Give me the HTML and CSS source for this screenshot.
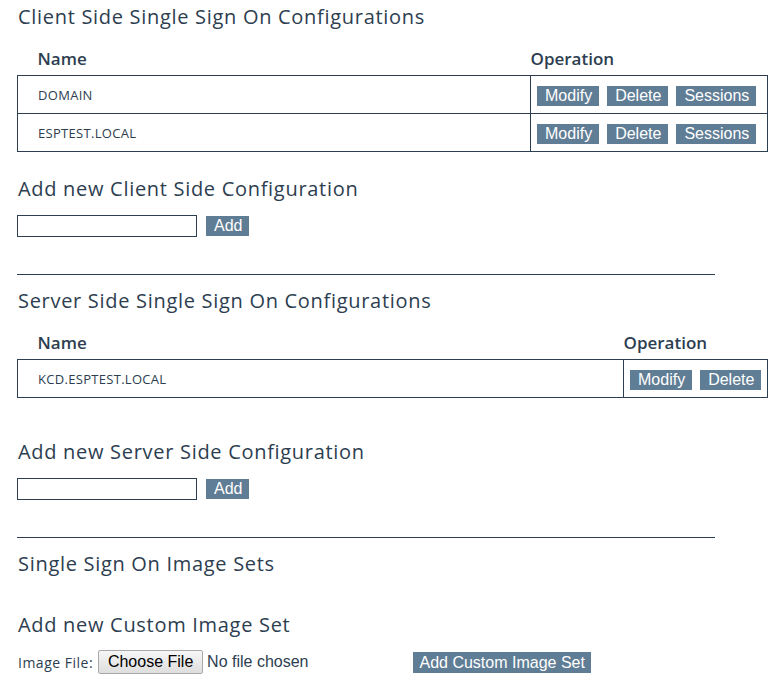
FILE: index.html
```html
<!DOCTYPE html>
<html>
<head>
<meta charset="utf-8">
<link rel="stylesheet" href="styles.css">
</head>
<body>
<div class="page">
  <h2 class="title first">Client Side Single Sign On Configurations</h2>
  <table class="grid grid-client">
    <colgroup><col class="col-name"><col class="col-op"></colgroup>
    <thead>
      <tr><th class="th-name">Name</th><th class="th-op">Operation</th></tr>
    </thead>
    <tbody>
      <tr><td class="td-name">DOMAIN</td><td class="td-op"><button class="btn">Modify</button><button class="btn">Delete</button><button class="btn">Sessions</button></td></tr>
      <tr><td class="td-name">ESPTEST.LOCAL</td><td class="td-op"><button class="btn">Modify</button><button class="btn">Delete</button><button class="btn">Sessions</button></td></tr>
    </tbody>
  </table>

  <h2 class="title after-table">Add new Client Side Configuration</h2>
  <div class="add-row"><input class="text-in" type="text"><button class="btn">Add</button></div>
  <hr class="sep">

  <h2 class="title after-hr">Server Side Single Sign On Configurations</h2>
  <table class="grid grid-server">
    <colgroup><col class="col-name"><col class="col-op"></colgroup>
    <thead>
      <tr><th class="th-name">Name</th><th class="th-op">Operation</th></tr>
    </thead>
    <tbody>
      <tr><td class="td-name">KCD.ESPTEST.LOCAL</td><td class="td-op"><button class="btn">Modify</button><button class="btn">Delete</button></td></tr>
    </tbody>
  </table>

  <h2 class="title after-table2">Add new Server Side Configuration</h2>
  <div class="add-row"><input class="text-in" type="text"><button class="btn">Add</button></div>
  <hr class="sep">

  <h2 class="title after-hr">Single Sign On Image Sets</h2>
  <h2 class="title after-sets">Add new Custom Image Set</h2>
  <div class="file-row">
    <label class="file-label">Image File:</label>
    <span class="file-btn">Choose File</span>
    <span class="file-none">No file chosen</span>
    <button class="btn btn-custom">Add Custom Image Set</button>
  </div>
</div>
</body>
</html>
```

FILE: styles.css
```css
html, body {
  margin: 0;
  padding: 0;
  background: #ffffff;
}
.page {
  padding-left: 17px;
  color: #2d3e50;
  font-family: "Open Sans", "DejaVu Sans", sans-serif;
}
.title {
  font-size: 20px;
  font-weight: normal;
  line-height: 24px;
  height: 24px;
  margin: 0;
  padding-left: 1px;
  letter-spacing: 0.7px;
  white-space: nowrap;
}
.first { margin-top: 5px; }
.after-table { margin-top: 25px; }
.after-hr { margin-top: 14px; }
.after-table2 { margin-top: 42px; }
.after-sets { margin-top: 37px; }

.grid {
  border-collapse: collapse;
  table-layout: fixed;
  margin-top: 13px;
  width: 751px;
}
.grid-client .col-op { width: 237px; }
.grid-server .col-op { width: 144px; }
.grid th {
  height: 33px;
  padding: 0;
  text-align: left;
  font-size: 17px;
  font-weight: 600;
  vertical-align: middle;
  white-space: nowrap;
}
.grid .th-name { padding-left: 20px; }
.grid .th-op { padding-left: 0; }
.grid td {
  border: 1px solid #2d3e50;
  height: 37px;
  padding: 0;
  vertical-align: middle;
}
.grid .td-name {
  padding-left: 20px;
  font-size: 13px;
  letter-spacing: 0.3px;
}
.grid .td-op {
  white-space: nowrap;
  padding-left: 6px;
}

.btn {
  background: #5f7d95;
  color: #ffffff;
  border: none;
  border-radius: 0;
  font-family: "Liberation Sans", Arial, sans-serif;
  font-size: 16px;
  height: 20px;
  line-height: 20px;
  padding: 0 7px 0 8px;
  margin: 0 8px 0 0;
  vertical-align: middle;
}
.add-row {
  margin-top: 14px;
  height: 22px;
  display: flex;
  align-items: center;
}
.text-in {
  width: 180px;
  height: 22px;
  box-sizing: border-box;
  border: 1px solid #2d3e50;
  margin: 0 9px 0 0;
  padding: 0;
}
.sep {
  margin: 37px 0 0 0;
  width: 698px;
  border: none;
  border-top: 1px solid #2d3e50;
  height: 0;
}
.file-row {
  margin-top: 13px;
  display: flex;
  align-items: center;
  height: 24px;
}
.file-label {
  font-size: 14px;
  letter-spacing: 0.5px;
  margin-left: 1px;
  margin-right: 5px;
}
.file-btn {
  box-sizing: border-box;
  height: 24px;
  width: 105px;
  border: 1px solid #a9a9a9;
  border-radius: 2px;
  background: linear-gradient(#f6f6f6, #dedede);
  color: #000;
  font-family: "Liberation Sans", Arial, sans-serif;
  font-size: 16px;
  line-height: 22px;
  text-align: center;
}
.file-none {
  margin-left: 4px;
  font-family: "Liberation Sans", Arial, sans-serif;
  font-size: 16px;
  color: #2d3e50;
}
.btn-custom {
  margin-left: 105px;
  height: 21px;
  line-height: 21px;
  padding: 0 6px;
}
```
